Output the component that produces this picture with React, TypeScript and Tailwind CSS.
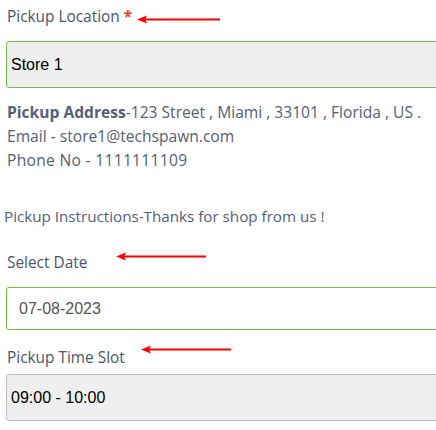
import React from "react";

function Arrow({ left, top, width }: { left: number; top: number; width: number }) {
  return (
    <svg
      className="absolute"
      style={{ left, top }}
      width={width}
      height={9}
      viewBox={`0 0 ${width} 9`}
    >
      <line x1={8} y1={4.5} x2={width} y2={4.5} stroke="#ff0000" strokeWidth={2} />
      <polygon points={`0,4.5 10,0.5 8,4.5 10,8.5`} fill="#ff0000" />
    </svg>
  );
}

export default function App() {
  const label = "font-['Open_Sans',sans-serif] text-[15.4px] text-[#4a5568]";
  return (
    <div className="relative w-[436px] h-[430px] overflow-hidden bg-white">
      <div className="w-[460px] pl-[6px]">
        <div className={`${label} pl-[1px] pt-[6px] h-[41px] leading-[22px]`}>
          Pickup Location <span className="text-[#f03a3a] font-bold">*</span>
        </div>
        <div className="h-[47px] border border-[#6dbf45] rounded-[3px] bg-[#efefef] flex items-center pl-[4px] font-['Liberation_Sans',sans-serif] text-[16px] text-black">
          Store 1
        </div>
        <div className="pt-[12px] pl-[1px] font-['Open_Sans',sans-serif] text-[15.6px] leading-[24px] text-[#536079]">
          <div>
            <span className="font-bold">Pickup Address</span>-123 Street , Miami , 33101 , Florida , US .
          </div>
          <div>Email - store1@techspawn.com</div>
          <div className="tracking-[0.3px]">Phone No - 1111111109</div>
        </div>
        <div className="mt-[32px] -ml-[2px] font-['Open_Sans',sans-serif] text-[15.2px] leading-[24px] text-[#536079]">
          Pickup Instructions-Thanks for shop from us !
        </div>
        <div className={`${label} mt-[23px] pl-[1px] leading-[24px] h-[36px]`}>Select Date</div>
        <div className="h-[43px] border border-[#6dbf45] rounded-[3px] bg-white flex items-center pl-[12px] font-['Liberation_Sans',sans-serif] text-[16px] text-[#555555]">
          07-08-2023
        </div>
        <div className={`${label} mt-[16px] pl-[1px] leading-[24px] h-[28px]`}>Pickup Time Slot</div>
        <div className="h-[47px] border border-[#bdbdbd] rounded-[3px] bg-[#efefef] flex items-center pl-[4px] font-['Liberation_Sans',sans-serif] text-[16px] text-black">
          09:00 - 10:00
        </div>
      </div>
      <Arrow left={137} top={14.5} width={83} />
      <Arrow left={116} top={251.5} width={90} />
      <Arrow left={141} top={344.5} width={90} />
    </div>
  );
}
